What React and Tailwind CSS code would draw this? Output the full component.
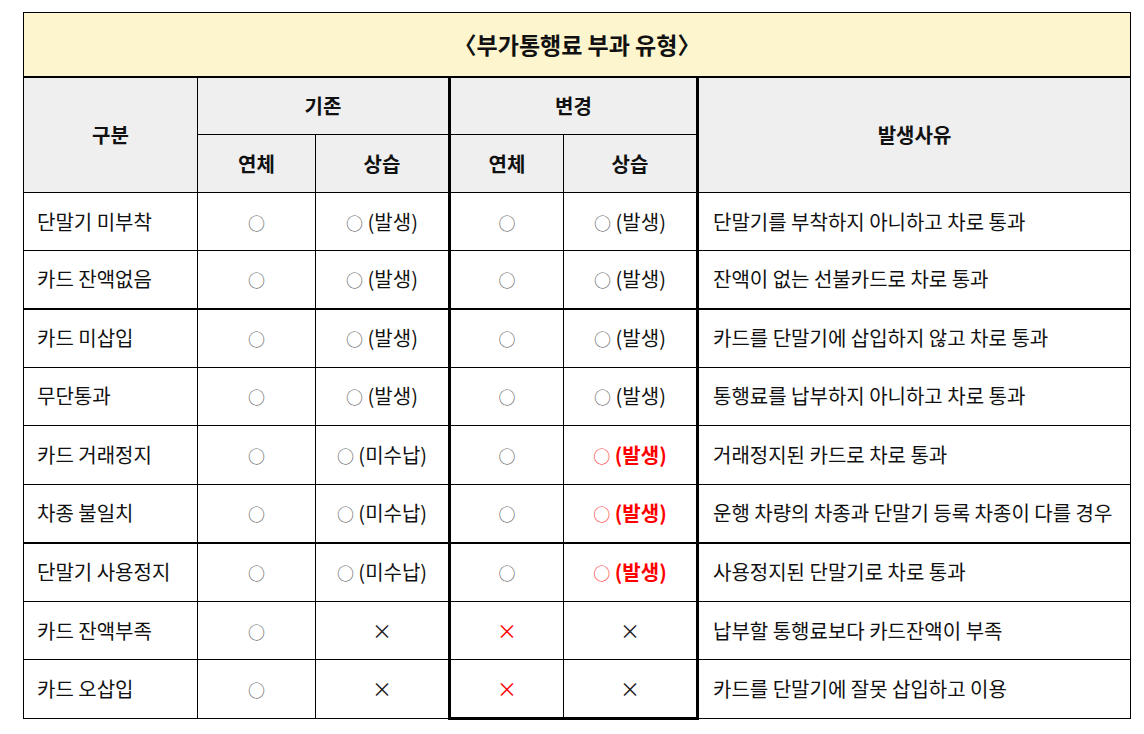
import React from "react";

const rows = [
  { name: "단말기 미부착", a: "○", b: "○ (발생)", c: "○", d: "○ (발생)", reason: "단말기를 부착하지 아니하고 차로 통과", h: "h-[58px]" },
  { name: "카드 잔액없음", a: "○", b: "○ (발생)", c: "○", d: "○ (발생)", reason: "잔액이 없는 선불카드로 차로 통과", thick: true, h: "h-[58px]" },
  { name: "카드 미삽입", a: "○", b: "○ (발생)", c: "○", d: "○ (발생)", reason: "카드를 단말기에 삽입하지 않고 차로 통과", h: "h-[58.5px]" },
  { name: "무단통과", a: "○", b: "○ (발생)", c: "○", d: "○ (발생)", reason: "통행료를 납부하지 아니하고 차로 통과", h: "h-[58.5px]" },
  { name: "카드 거래정지", a: "○", b: "○ (미수납)", c: "○", d: "○ (발생)", red: true, reason: "거래정지된 카드로 차로 통과", h: "h-[58.5px]" },
  { name: "차종 불일치", a: "○", b: "○ (미수납)", c: "○", d: "○ (발생)", red: true, reason: "운행 차량의 차종과 단말기 등록 차종이 다를 경우", thick: true, h: "h-[58.5px]" },
  { name: "단말기 사용정지", a: "○", b: "○ (미수납)", c: "○", d: "○ (발생)", red: true, reason: "사용정지된 단말기로 차로 통과", h: "h-[58.7px]" },
  { name: "카드 잔액부족", a: "○", b: "×", c: "×", cRed: true, d: "×", reason: "납부할 통행료보다 카드잔액이 부족", h: "h-[58.7px]" },
  { name: "카드 오삽입", a: "○", b: "×", c: "×", cRed: true, d: "×", reason: "카드를 단말기에 잘못 삽입하고 이용", last: true, h: "h-[58.7px]" },
];

const Mark = ({ text, red }) => {
  if (text === "×") {
    return <span className={red ? "text-[#ff0000]" : "text-[#222]"}>×</span>;
  }
  const parts = text.split(" ");
  return (
    <span className={red ? "text-[#ff0000] font-bold" : ""}>
      <span className={`text-[17px] ${red ? "text-[#ff3b3b] font-normal" : "text-[#666]"}`}>{parts[0]}</span>
      {parts[1] ? " " + parts[1] : ""}
    </span>
  );
};

export default function App() {
  return (
    <div className="bg-white min-h-screen pt-[12px] pl-[23px] text-[#111]" style={{ fontFamily: '"Noto Sans CJK KR", "Noto Sans", sans-serif' }}>
      <table className="table-fixed border-collapse text-[20px] w-[1107px]">
        <colgroup>
          <col className="w-[174px]" />
          <col className="w-[118px]" />
          <col className="w-[134px]" />
          <col className="w-[114px]" />
          <col className="w-[134px]" />
          <col className="w-[433px]" />
        </colgroup>
        <thead>
          <tr>
            <th colSpan={6} className="h-[64px] bg-[#fdf5cd] border border-black border-b-2 text-[23px] font-bold">
              〈부가통행료 부과 유형〉
            </th>
          </tr>
          <tr className="bg-[#efefef]">
            <th rowSpan={2} className="border border-black font-bold">구분</th>
            <th colSpan={2} className="h-[58px] border border-black font-bold">기존</th>
            <th colSpan={2} className="border border-black border-l-[3px] border-r-[3px] font-bold">변경</th>
            <th rowSpan={2} className="border border-black border-l-[3px] font-bold">발생사유</th>
          </tr>
          <tr className="bg-[#efefef]">
            <th className="h-[58px] border border-black font-bold">연체</th>
            <th className="border border-black font-bold">상습</th>
            <th className="border border-black border-l-[3px] font-bold">연체</th>
            <th className="border border-black border-r-[3px] font-bold">상습</th>
          </tr>
        </thead>
        <tbody>
          {rows.map((r) => (
            <tr key={r.name}>
              <td className={`${r.h} border border-black pl-[13px] whitespace-nowrap ${r.thick ? "border-b-2" : ""}`}>{r.name}</td>
              <td className={`border border-black text-center ${r.thick ? "border-b-2" : ""}`}><Mark text={r.a} /></td>
              <td className={`border border-black text-center whitespace-nowrap ${r.thick ? "border-b-2" : ""}`}><Mark text={r.b} /></td>
              <td className={`border border-black border-l-[3px] text-center ${r.thick ? "border-b-2" : ""} ${r.last ? "border-b-[3px]" : ""}`}><Mark text={r.c} red={r.cRed} /></td>
              <td className={`border border-black border-r-[3px] text-center whitespace-nowrap ${r.thick ? "border-b-2" : ""} ${r.last ? "border-b-[3px]" : ""}`}><Mark text={r.d} red={r.red} /></td>
              <td className={`border border-black border-l-[3px] pl-[14px] whitespace-nowrap ${r.thick ? "border-b-2" : ""}`}>{r.reason}</td>
            </tr>
          ))}
        </tbody>
      </table>
    </div>
  );
}
